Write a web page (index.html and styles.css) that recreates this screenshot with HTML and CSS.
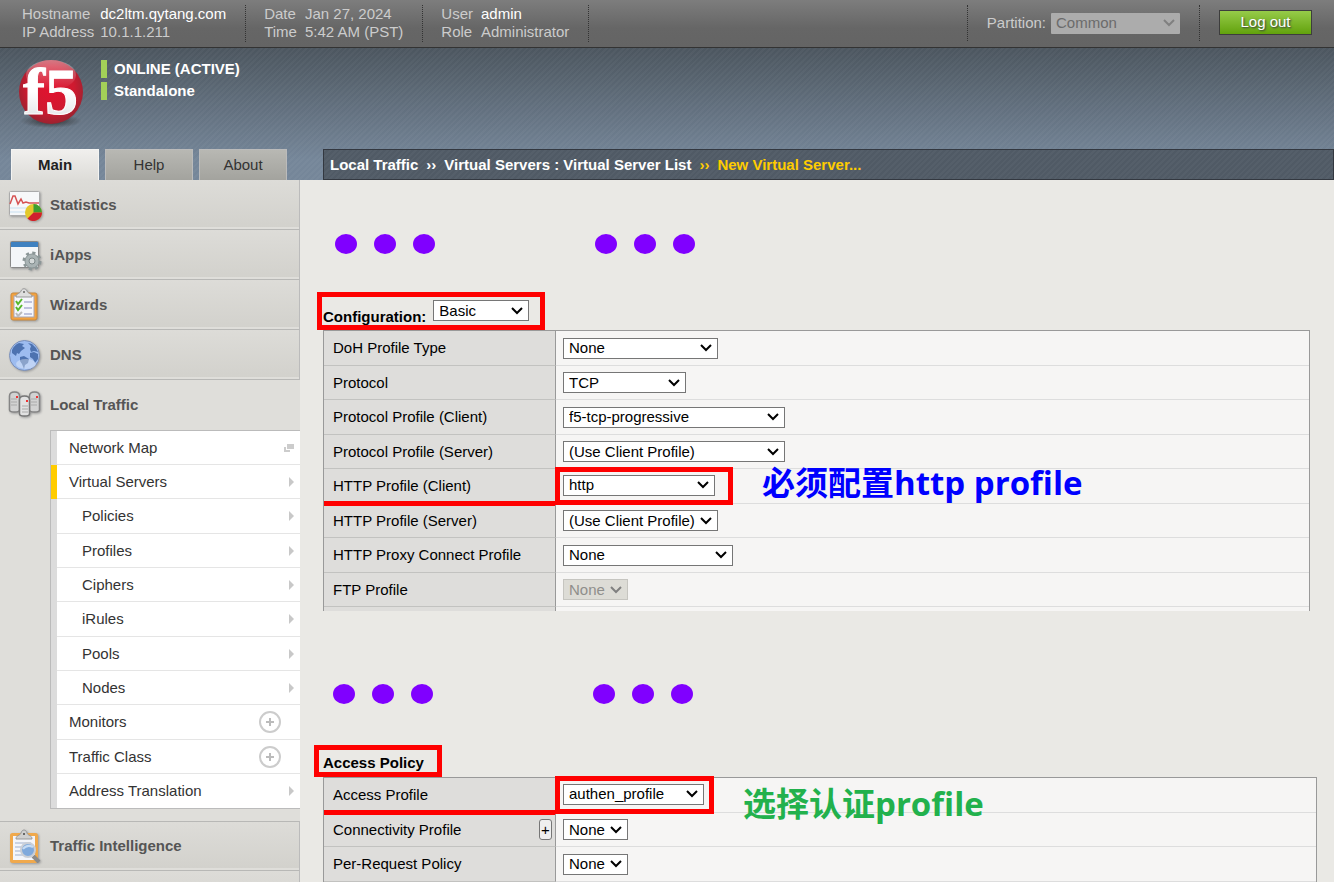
FILE: index.html
```html
<!DOCTYPE html>
<html lang="en">
<head>
<meta charset="utf-8">
<title>BIG-IP - New Virtual Server</title>
<link rel="stylesheet" href="styles.css">
</head>
<body>
<header class="topbar">
  <dl class="info"><dt>Hostname</dt><dd class="strong">dc2ltm.qytang.com</dd><dt>IP Address</dt><dd>10.1.1.211</dd></dl>
  <dl class="info"><dt>Date</dt><dd>Jan 27, 2024</dd><dt>Time</dt><dd>5:42 AM (PST)</dd></dl>
  <dl class="info"><dt>User</dt><dd class="strong">admin</dd><dt>Role</dt><dd>Administrator</dd></dl>
  <div class="partition">
    <label for="partition">Partition:</label>
    <select id="partition" disabled><option>Common</option></select>
  </div>
  <button class="logout" type="button">Log out</button>
</header>

<div class="banner">
  <div class="device">
    <svg class="logo" viewBox="0 0 72 72" role="img" aria-label="f5">
      <defs>
        <radialGradient id="ball" cx="50%" cy="45%" r="60%"><stop offset="0" stop-color="#e2122f"/><stop offset=".6" stop-color="#cf1a30"/><stop offset="1" stop-color="#8d2530"/></radialGradient>
        <linearGradient id="shine" x1="0" y1="0" x2="0" y2="1"><stop offset="0" stop-color="#fff" stop-opacity=".4"/><stop offset="1" stop-color="#fff" stop-opacity="0"/></linearGradient>
        <linearGradient id="letters" x1="0" y1="0" x2="0" y2="1"><stop offset=".5" stop-color="#fff"/><stop offset="1" stop-color="#d9dde0"/></linearGradient>
        <radialGradient id="shade"><stop offset="0" stop-color="#222" stop-opacity=".9"/><stop offset="1" stop-color="#333" stop-opacity="0"/></radialGradient>
      </defs>
      <ellipse cx="36" cy="65" rx="31" ry="7" fill="url(#shade)"/>
      <circle cx="36" cy="36" r="32" fill="url(#ball)"/>
      <ellipse cx="36" cy="19" rx="25" ry="15" fill="url(#shine)"/>
      <text class="logo-text" x="8" y="58" fill="url(#letters)">f5</text>
    </svg>
    <div class="status"><p>ONLINE (ACTIVE)</p><p>Standalone</p></div>
  </div>
  <div class="navrow">
    <nav class="tabs"><a class="tab active" href="#">Main</a><a class="tab" href="#">Help</a><a class="tab" href="#">About</a></nav>
    <div class="crumbs"><span>Local Traffic</span><span>››</span><span>Virtual Servers : Virtual Server List</span><span class="here">››</span><span class="here">New Virtual Server...</span></div>
  </div>
</div>

<div class="layout">
  <nav class="sidebar">
    <a class="item" href="#">
      <svg viewBox="0 0 34 34"><rect x="1.500" y="3.500" width="30" height="24" rx="1" fill="#f7f8f9" stroke="#aaa"/><path d="M2 20h29M2 24h29" stroke="#c7dff0"/><path d="M2 16l3-8 2 0 3 8 3-5 2 4 3-1 3 1h10" fill="none" stroke="#d65353" stroke-width="1.500"/><circle cx="25.500" cy="24.500" r="8.500" fill="#e3c82b"/><path d="M25.500 24.500V16a8.500 8.500 0 0 1 8.500 8.500z" fill="#3d9e30"/><path d="M25.500 24.500H34a8.500 8.500 0 0 1-14.500 6z" fill="#d0202e"/></svg>
      Statistics</a>
    <a class="item" href="#">
      <svg viewBox="0 0 34 34"><rect x="2.500" y="3.500" width="28" height="26" rx="1" fill="#f4f6f8" stroke="#888"/><path d="M3 4h27v5H3z" fill="#3f81c0"/><circle cx="24" cy="23" r="8" fill="none" stroke="#8b9697" stroke-width="3" stroke-dasharray="3.140 3.140"/><circle cx="24" cy="23" r="7" fill="#a9b3b4" stroke="#8b9697"/><circle cx="24" cy="23" r="3" fill="#d4d9d9" stroke="#7e898a"/></svg>
      iApps</a>
    <a class="item" href="#">
      <svg viewBox="0 0 34 34"><rect x="3" y="5" width="26" height="27" rx="2" fill="#f2a23f" stroke="#c98a40"/><rect x="6" y="8" width="20" height="21" fill="#f6f7fc" stroke="#a9a6b5"/><path d="M8 13l2 3 4-5M8 19l2 3 4-5" fill="none" stroke="#57b82c" stroke-width="2"/><path d="M8 25l2 3 4-4" fill="none" stroke="#bbb" stroke-width="2"/><path d="M16 14h8M16 20h8M16 26h8" stroke="#bfc3dd" stroke-width="2"/><path d="M8 9c0-4 4-3 5-6 1-3 5-3 6 0 1 3 5 2 5 6z" fill="#dedede" stroke="#999"/><circle cx="16" cy="4" r="1" fill="#666"/></svg>
      Wizards</a>
    <a class="item" href="#">
      <svg viewBox="0 0 34 34"><circle cx="16.500" cy="17.500" r="15" fill="#9dbcf0" stroke="#7c90b8"/><path d="M4 12c2-4 4-6 7-7l5 1-2 2 3 2-4 3-2 3-2-1-1 3-4-3zM12 19l4-1 5 3-1 4-3 2-1 4-2-5-2-3zM20 5l4 1 4 4 2 4-4-1-3 1-1-3 1-3z" fill="#4d72b0"/><path d="M22 15l4-1 4 2 0 5-3 4-2-4-3-2z" fill="#4d72b0"/><ellipse cx="18" cy="26" rx="10" ry="5" fill="#fff" opacity=".35"/></svg>
      DNS</a>
    <a class="item open" href="#">
      <svg viewBox="0 0 34 34"><g id="srv"><path d="M1.500 8q0-4 5-4t5 4v14q0 2-5 2t-5-2z" fill="#d2d2d2" stroke="#858585" stroke-width="1.500"/><path d="M3 11h6M3 14h6M3 17h6" stroke="#aaa"/><path d="M8 8h2v2H8z" fill="#e33"/></g><use href="#srv" x="20"/><path d="M11.500 12q0-4 5-4t5 4v14q0 2-5 2t-5-2z" fill="#e2e2e2" stroke="#777" stroke-width="1.500"/><path d="M14 18h6M14 21h6M14 24h6" stroke="#aaa"/><path d="M18 12h2v2h-2z" fill="#e33"/></svg>
      Local Traffic</a>
    <ul class="submenu">
      <li><a href="#">Network Map <svg class="popout" viewBox="0 0 10 8"><path d="M3 0h7v5H3z" fill="#ccc"/><path d="M2 3H0v5h6V6H2z" fill="#ccc"/></svg></a></li>
      <li class="current"><a href="#">Virtual Servers <i class="arrow"></i></a></li>
      <li class="child"><a href="#">Policies <i class="arrow"></i></a></li>
      <li class="child"><a href="#">Profiles <i class="arrow"></i></a></li>
      <li class="child"><a href="#">Ciphers <i class="arrow"></i></a></li>
      <li class="child"><a href="#">iRules <i class="arrow"></i></a></li>
      <li class="child"><a href="#">Pools <i class="arrow"></i></a></li>
      <li class="child"><a href="#">Nodes <i class="arrow"></i></a></li>
      <li><a href="#">Monitors <svg class="add" viewBox="0 0 24 24"><circle cx="12" cy="12" r="10" fill="#fff" stroke="#ccc" stroke-width="2"/><path d="M12 8v8M8 12h8" stroke="#bbb" stroke-width="2"/></svg></a></li>
      <li><a href="#">Traffic Class <svg class="add" viewBox="0 0 24 24"><circle cx="12" cy="12" r="10" fill="#fff" stroke="#ccc" stroke-width="2"/><path d="M12 8v8M8 12h8" stroke="#bbb" stroke-width="2"/></svg></a></li>
      <li><a href="#">Address Translation <i class="arrow"></i></a></li>
    </ul>
    <a class="item" href="#">
      <svg viewBox="0 0 34 34"><rect x="3.500" y="5.500" width="25" height="27" rx="1" fill="#f3f5fa" stroke="#f0a94c" stroke-width="3"/><path d="M7 14h16M7 18h16M7 22h16M7 26h10" stroke="#bcc6dc" stroke-width="1.500"/><path d="M8 10c0-4 4-3 5-6 1-4 5-4 6 0 1 3 5 2 5 6z" fill="#cfcfcf" stroke="#999"/><circle cx="16" cy="5" r="1" fill="#444"/><path d="M25 27l6 6" stroke="#8b8b8b" stroke-width="4"/><circle cx="20" cy="21" r="7" fill="#7fa9dc" stroke="#c9ced6" stroke-width="2"/><path d="M15 20q4-5 10-2" fill="none" stroke="#c5dbf4" stroke-width="2"/></svg>
      Traffic Intelligence</a>
    <div class="item"></div>
  </nav>

  <main class="content">
    <div class="dots first"><i></i><i></i><i></i><i class="jump"></i><i></i><i></i></div>
    <div class="heading config"><label for="config">Configuration:</label><select id="config" class="w96"><option>Basic</option></select></div>
    <table class="settings">
      <tr><th><label for="doh">DoH Profile Type</label></th><td><select id="doh" class="w155"><option>None</option></select></td></tr>
      <tr><th><label for="proto">Protocol</label></th><td><select id="proto" class="w123"><option>TCP</option></select></td></tr>
      <tr><th><label for="ppc">Protocol Profile (Client)</label></th><td><select id="ppc" class="w222"><option>f5-tcp-progressive</option></select></td></tr>
      <tr><th><label for="pps">Protocol Profile (Server)</label></th><td><select id="pps" class="w222"><option>(Use Client Profile)</option></select></td></tr>
      <tr class="marked"><th><label for="hpc">HTTP Profile (Client)</label></th><td><div class="cell"><span class="frame wide"><select id="hpc" class="w152"><option>http</option></select></span><strong class="note blue">必须配置http profile</strong></div></td></tr>
      <tr><th><label for="hps">HTTP Profile (Server)</label></th><td><select id="hps" class="w155"><option>(Use Client Profile)</option></select></td></tr>
      <tr><th><label for="hpx">HTTP Proxy Connect Profile</label></th><td><select id="hpx" class="w170"><option>None</option></select></td></tr>
      <tr><th><label for="ftp">FTP Profile</label></th><td><select id="ftp" class="w65" disabled><option>None</option></select></td></tr>
      <tr class="stub"><th></th><td></td></tr>
    </table>

    <div class="dots second"><i></i><i></i><i></i><i class="jump"></i><i></i><i></i></div>
    <h2 class="heading policy">Access Policy</h2>
    <table class="settings full">
      <tr class="marked"><th><label for="ap">Access Profile</label></th><td><div class="cell"><span class="frame"><select id="ap" class="w141"><option>authen_profile</option></select></span><strong class="note green">选择认证profile</strong></div></td></tr>
      <tr><th><div class="with-button"><label for="cp">Connectivity Profile</label><button class="plus" type="button" aria-label="Add connectivity profile">+</button></div></th><td><select id="cp" class="w65"><option>None</option></select></td></tr>
      <tr><th><label for="prp">Per-Request Policy</label></th><td><select id="prp" class="w65"><option>None</option></select></td></tr>
      <tr class="stub"><th></th><td></td></tr>
    </table>
  </main>
</div>
</body>
</html>
```
FILE: styles.css
```css
* { box-sizing: border-box; }
body {
  margin: 0;
  height: 100vh;
  overflow: hidden;
  display: flex;
  flex-direction: column;
  background: #eae9e5;
  color: #000;
  font: 15px/18px "Liberation Sans", Arial, sans-serif;
}
a { color: inherit; text-decoration: none; }
select, button { font: inherit; }
select {
  display: block;
  appearance: none;
  height: 21px;
  padding: 0 0 0 5px;
  border: 1px solid #767676;
  border-radius: 0;
  background: #fff url("data:image/svg+xml,%3Csvg xmlns='http://www.w3.org/2000/svg' width='12' height='8'%3E%3Cpath d='M1 1l5 5 5-5' fill='none' stroke='black' stroke-width='2'/%3E%3C/svg%3E") no-repeat right 5px center;
  color: #000;
}
select:disabled {
  opacity: 1;
  background-color: #dddcd6;
  background-image: url("data:image/svg+xml,%3Csvg xmlns='http://www.w3.org/2000/svg' width='12' height='8'%3E%3Cpath d='M1 1l5 5 5-5' fill='none' stroke='gray' stroke-width='2'/%3E%3C/svg%3E");
  border-color: #c6c5c0;
  color: #8f8e8b;
}

/* Top bar */
.topbar {
  flex: none;
  display: flex;
  align-items: flex-start;
  padding: 5px 22px 5px 3px;
  background: linear-gradient(#7d7d7d, #666 60%, #646464);
  border-bottom: 1px solid #333;
  color: #ccc;
}
.info {
  display: grid;
  grid-template-columns: auto auto;
  column-gap: 6px;
  margin: 0;
  padding: 0 19px 1px;
  border-right: 1px dotted #333;
}
.info:not(:first-child) { column-gap: 8px; padding-left: 18px; }
.info dd { margin: 0; }
.info .strong { color: #fff; }
.partition {
  display: flex;
  align-items: center;
  gap: 5px;
  height: 36px;
  margin-left: auto;
  padding: 0 19px;
  border: 1px dotted #333;
  border-width: 0 1px;
}
.partition select { width: 129px; border: 0; border-radius: 1px; background-color: #acacac; color: #6b6b6b; }
.logout {
  width: 93px;
  height: 25px;
  margin: 5px 0 0 19px;
  padding: 0 0 2px;
  border: 1px solid #3d3d3d;
  background: linear-gradient(#96cb49, #62a20d);
  color: #fff;
  text-shadow: 1px 1px 2px #334;
}

/* Banner */
.banner {
  flex: none;
  background:
    repeating-linear-gradient(135deg, rgba(255,255,255,.03) 0 2px, transparent 2px 4px),
    linear-gradient(#4c565f, #758699 85%);
}
.device { display: flex; height: 101px; padding: 8px 15px; }
.logo { width: 72px; height: 72px; overflow: visible; }
.logo-text { font: bold 66px "Liberation Serif", serif; stroke: #fff; stroke-width: 1px; }
.status { padding: 4px 14px; color: #fff; font-weight: bold; }
.status p { margin: 0 0 4px; padding-left: 7px; border-left: 6px solid #a3d058; }
.navrow { display: flex; height: 31px; }
.tabs { flex: none; display: flex; gap: 6px; width: 323px; padding-left: 11px; }
.tab { width: 88px; padding-top: 6px; text-align: center; background: linear-gradient(#b8b8b3, #a3a39e); color: #333; border: 1px solid #bbb; border-bottom: 0; }
.tab.active { background: linear-gradient(#f0efed, #dddcd8); color: #222; font-weight: bold; border-color: #f4f4f2; }
.crumbs {
  flex: 1;
  display: flex;
  gap: 8px;
  padding: 6px;
  border: 1px solid #333840;
  background: repeating-linear-gradient(135deg, rgba(255,255,255,.03) 0 2px, transparent 2px 4px), #505a65;
  color: #fff;
  font-weight: bold;
}
.crumbs .here { color: #fc0; }

/* Sidebar */
.layout { flex: 1; min-height: 0; display: flex; }
.sidebar { flex: none; width: 300px; background: #dfdeda; }
.item {
  display: flex;
  align-items: center;
  gap: 8px;
  height: 50px;
  padding: 0 8px;
  border-right: 1px solid #bbb;
  border-bottom: 1px solid #b8b8b6;
  box-shadow: inset 0 -2px #dfdeda;
  background: linear-gradient(#dddcd8, #d2d1cc);
  color: #555;
  font-weight: bold;
}
.item svg { width: 34px; height: 34px; filter: drop-shadow(1px 1px 1px #999); }
.item.open { border-color: transparent; background: none; box-shadow: none; }
.submenu {
  margin: 0 0 12px 50px;
  padding: 0;
  list-style: none;
  border: 1px solid #bbb;
  border-right: 0;
  background: #fff;
}
.submenu li { height: 34px; border-left: 6px solid #dcdcdc; }
.submenu li:nth-child(3n) { height: 35px; }
.submenu .current { border-left-color: #fc0; }
.submenu a {
  display: flex;
  align-items: center;
  justify-content: space-between;
  height: 100%;
  padding: 0 6px 0 12px;
  border-bottom: 1px solid #e5e5e5;
  color: #333;
}
.submenu li:last-child a { border-bottom: 0; }
.submenu .child a { padding-left: 25px; }
.arrow { border: 5px solid transparent; border-left-color: #c8c8c8; border-right-width: 0; }
.popout { width: 10px; height: 8px; }
.add { width: 24px; height: 24px; margin-right: 12px; }
.submenu + .item { border-top: 1px solid #b8b8b6; }

/* Settings pages */
.content { flex: 1; min-width: 0; padding: 54px 17px 0 23px; }
.dots { display: flex; gap: 17px; }
.dots i { width: 22px; height: 20px; border-radius: 50%; background: #8000ff; }
.dots .jump { margin-left: 143px; }
.dots.first { margin: 0 0 38px 12px; }
.dots.second { margin: 73px 0 41px 10px; }
.heading {
  display: flex;
  width: max-content;
  margin: 0;
  border: 5px solid #f00;
  font: bold 15px/18px "Liberation Sans", Arial, sans-serif;
}
.config { align-items: flex-start; gap: 7px; margin-left: -6px; padding: 3px 11px 4px 1px; }
.config label { padding-top: 8px; height: 21px; }
.config select { font-weight: normal; }
.policy { margin-left: -9px; padding: 4px 13px 0 4px; }
.settings {
  width: calc(100% - 7px);
  border-collapse: separate;
  border-spacing: 0;
  border: 1px solid #999;
  border-bottom: 0;
  background: #f6f5f4;
}
.settings.full { width: 100%; }
.settings tr { height: 35px; }
.settings tr:nth-child(even) { height: 34px; }
.settings tr.stub { height: 4px; }
.settings th, .settings td { padding: 0; border-bottom: 1px solid #ddd; }
.settings th {
  width: 232px;
  padding-left: 9px;
  border-right: 1px solid #999;
  border-bottom-color: #c2c2c0;
  background: #dedddb;
  text-align: left;
  font-weight: normal;
}
.settings td { padding-left: 7px; }
.settings .marked td { padding-bottom: 2px; }
.settings .stub th, .settings .stub td { border-bottom: 0; }
.with-button { display: flex; justify-content: space-between; align-items: center; padding-right: 3px; }
.plus { width: 13px; height: 21px; padding: 0; border: 1px solid #767676; border-radius: 3px; background: #efefef; }

/* Callouts drawn over the rows */
.marked th, .cell, .frame { position: relative; }
.cell { display: flex; }
.marked th::after { content: ""; position: absolute; z-index: 1; left: 0; right: 0; bottom: -3px; height: 5px; background: #f00; }
.frame::before { content: ""; position: absolute; z-index: 1; inset: -8px -10px -9px -8px; border: 5px solid #f00; pointer-events: none; }
.frame.wide::before { right: -18px; }
.note {
  position: absolute;
  z-index: 1;
  font: bold 33px/40px "Open Sans", "Noto Sans CJK SC", sans-serif;
  white-space: nowrap;
}
.blue { left: 199px; top: -12px; color: #00f; }
.green { left: 180px; top: 0; color: #22b14c; }

.w65 { width: 65px; }
.w96 { width: 96px; }
.w123 { width: 123px; }
.w141 { width: 141px; }
.w152 { width: 152px; }
.w155 { width: 155px; }
.w170 { width: 170px; }
.w222 { width: 222px; }
```
